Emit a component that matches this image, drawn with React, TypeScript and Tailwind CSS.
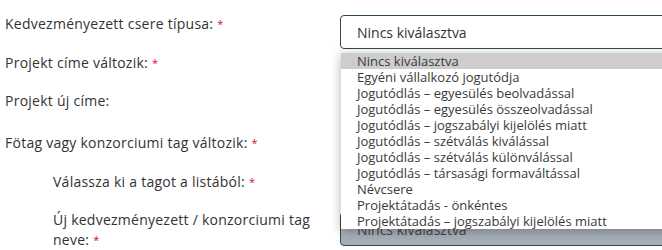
const options = [
  "Nincs kiválasztva",
  "Egyéni vállalkozó jogutódja",
  "Jogutódlás – egyesülés beolvadással",
  "Jogutódlás – egyesülés összeolvadással",
  "Jogutódlás – jogszabályi kijelölés miatt",
  "Jogutódlás – szétválás kiválással",
  "Jogutódlás – szétválás különválással",
  "Jogutódlás – társasági formaváltással",
  "Névcsere",
  "Projektátadás - önkéntes",
  "Projektátadás – jogszabályi kijelölés miatt",
];

function Req() {
  return <span className="ml-1 align-top text-[11px] text-[#d0102c]">*</span>;
}

function Row({
  label,
  required,
  indent,
  height,
  children,
}: {
  label: React.ReactNode;
  required?: boolean;
  indent?: boolean;
  height: string;
  children?: React.ReactNode;
}) {
  return (
    <div className={`flex items-start ${height}`}>
      <div className={`w-[335px] shrink-0 leading-5 tracking-[0.25px] ${indent ? "pl-12" : ""}`}>
        {label}
        {required && <Req />}
      </div>
      <div>{children}</div>
    </div>
  );
}

export default function App() {
  return (
    <div
      className="relative h-[250px] w-[662px] overflow-hidden bg-white pl-[5px] pt-[14px] text-[14px] text-[#333]"
      style={{ fontFamily: "'Open Sans', sans-serif" }}
    >
      <Row label="Kedvezményezett csere típusa:" required height="h-[39px]">
        <div className="mt-px flex h-[34px] w-[340px] items-center rounded-[4px] border border-[#2f4a4a] bg-white pl-4">
          Nincs kiválasztva
        </div>
      </Row>
      <Row label="Projekt címe változik:" required height="h-[38px]" />
      <Row label="Projekt új címe:" height="h-[42px]" />
      <Row label="Fötag vagy konzorciumi tag változik:" required height="h-[39px]" />
      <Row label="Válassza ki a tagot a listából:" required indent height="h-[38px]" />
      <Row
        label={
          <>
            Új kedvezményezett / konzorciumi tag
            <br />
            neve:
          </>
        }
        required
        indent
        height="h-[40px]"
      >
        <div className="mt-[2px] flex h-[34px] w-[340px] items-center rounded-[4px] border border-[#2f4a4a] bg-[#a6aeb8] pl-4 text-[#444]">
          Nincs kiválasztva
        </div>
      </Row>

      <ul className="absolute left-[341px] top-[53px] w-[340px] bg-white text-[13px] leading-4 text-[#3a3a3a] shadow-[0_2px_10px_rgba(0,0,0,0.3)]">
        {options.map((o, i) => (
          <li key={o} className={`h-4 overflow-hidden pl-4 ${i === 0 ? "bg-[#cdcdcd]" : ""}`}>
            {o}
          </li>
        ))}
      </ul>
    </div>
  );
}
